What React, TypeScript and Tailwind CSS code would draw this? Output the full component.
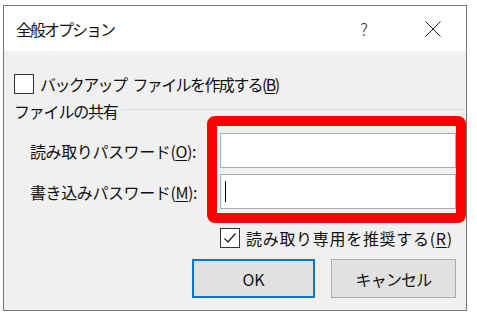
import React from 'react';

const font = { fontFamily: '"Noto Sans CJK JP", "Noto Sans", sans-serif' };

function Box({ checked }: { checked?: boolean }) {
  return (
    <div className="w-[20px] h-[20px] border border-[#333] bg-white flex items-center justify-center shrink-0">
      {checked && (
        <svg width="14" height="14" viewBox="0 0 14 14">
          <path d="M1.5 7.5 L5 11 L12.5 2.5" fill="none" stroke="#222" strokeWidth="1.3" />
        </svg>
      )}
    </div>
  );
}

export default function App() {
  return (
    <div className="w-[477px] h-[319px] bg-white pt-[5px] pl-[3px] text-[#111]" style={font}>
      <div className="relative w-[464px] h-[306px] border border-[#777] bg-[#f0f0f0] flex flex-col">
        {/* title bar */}
        <div className="h-[45px] bg-white flex items-center pl-[12px] shrink-0">
          <span className="text-[16px] tracking-[-2px]">全般オプション</span>
          <span className="ml-auto text-[17px] font-light text-[#333] mr-[57px]">?</span>
          <svg width="16" height="16" viewBox="0 0 16 16" className="mr-[25px]">
            <path d="M0.5 0.5 L15.5 15.5 M15.5 0.5 L0.5 15.5" stroke="#222" strokeWidth="1" />
          </svg>
        </div>

        <div className="flex flex-col pl-[10px] pt-[23px]">
          <div className="flex items-center h-[20px] gap-[6px]">
            <Box />
            <span className="text-[16px] tracking-[-1.6px]">
              バックアップ<span className="inline-block w-[6px]" />ファイルを作成する(<u className="underline-offset-2">B</u>)
            </span>
          </div>

          <div className="flex items-center h-[20px] mt-[7px]">
            <span className="text-[16px] tracking-[-1.2px]">ファイルの共有</span>
            <div className="flex-1 h-px bg-[#dcdcdc] mr-[2px] ml-[4px] -mt-[4px]" />
          </div>

          <div className="flex items-center mt-[12px] pl-[16px]">
            <span className="w-[190px] text-[16px] tracking-[-0.4px]">
              読み取りパスワード(<u className="underline-offset-2">O</u>):
            </span>
            <div className="w-[236px] h-[35px] bg-white border border-[#adadad]" />
          </div>
          <div className="flex items-center mt-[6px] pl-[16px]">
            <span className="w-[190px] text-[16px] tracking-[-0.4px]">
              書き込みパスワード(<u className="underline-offset-2">M</u>):
            </span>
            <div className="w-[236px] h-[35px] bg-white border border-[#adadad] flex items-center pl-[4px]">
              <div className="w-px h-[21px] bg-black" />
            </div>
          </div>

          <div className="flex items-center h-[20px] mt-[19px] pl-[206px] gap-[6px]">
            <Box checked />
            <span className="text-[16px] tracking-[0.7px]">
              読み取り専用を推奨する(<u className="underline-offset-2">R</u>)
            </span>
          </div>

          <div className="flex justify-end gap-[16px] mt-[11px] pr-[10px]">
            <button className="w-[123px] h-[39px] bg-[#e1e1e1] border-2 border-[#0078d7] text-[16px]">OK</button>
            <button className="w-[125px] h-[39px] bg-[#e1e1e1] border border-[#adadad] text-[16px] tracking-[-0.8px]">
              キャンセル
            </button>
          </div>
        </div>

        {/* red highlight overlay */}
        <div className="absolute left-[203px] top-[110px] w-[259px] h-[107px] border-[10px] border-[#ff0000] rounded-[8px]" />
      </div>
    </div>
  );
}
